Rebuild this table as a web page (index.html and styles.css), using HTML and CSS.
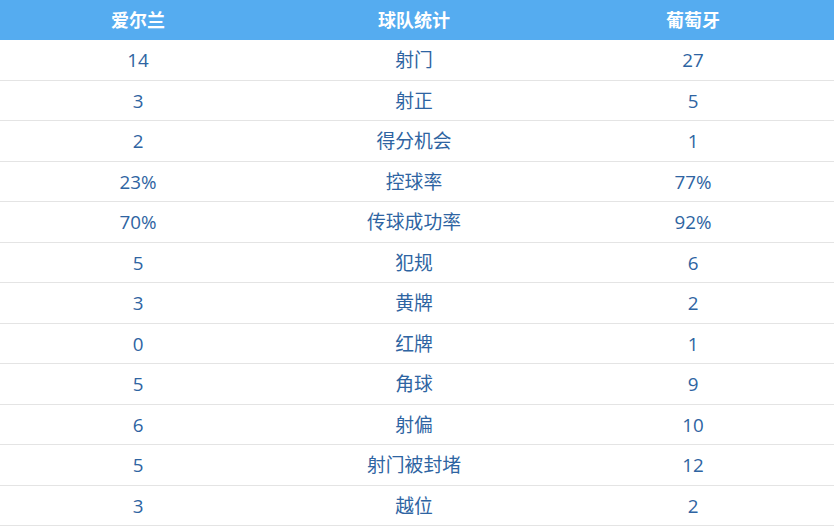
FILE: index.html
```html
<!DOCTYPE html>
<html lang="zh">
<head>
<meta charset="utf-8">
<link rel="stylesheet" href="styles.css">
</head>
<body>
<div class="stats">
  <div class="row head"><div>爱尔兰</div><div>球队统计</div><div>葡萄牙</div></div>
  <div class="row"><div>14</div><div>射门</div><div>27</div></div>
  <div class="row"><div>3</div><div>射正</div><div>5</div></div>
  <div class="row"><div>2</div><div>得分机会</div><div>1</div></div>
  <div class="row"><div>23%</div><div>控球率</div><div>77%</div></div>
  <div class="row"><div>70%</div><div>传球成功率</div><div>92%</div></div>
  <div class="row"><div>5</div><div>犯规</div><div>6</div></div>
  <div class="row"><div>3</div><div>黄牌</div><div>2</div></div>
  <div class="row"><div>0</div><div>红牌</div><div>1</div></div>
  <div class="row"><div>5</div><div>角球</div><div>9</div></div>
  <div class="row"><div>6</div><div>射偏</div><div>10</div></div>
  <div class="row"><div>5</div><div>射门被封堵</div><div>12</div></div>
  <div class="row"><div>3</div><div>越位</div><div>2</div></div>
</div>
</body>
</html>
```
FILE: styles.css
```css
html, body {
  margin: 0;
  padding: 0;
  background: #ffffff;
}
body {
  font-family: "Open Sans", "Noto Sans CJK SC", sans-serif;
  font-size: 18.8px;
  color: #2e64a2;
}
.stats {
  width: 834px;
}
.row {
  display: grid;
  grid-template-columns: 276px 276px 1fr;
  height: 39.5px;
  box-sizing: content-box;
  border-bottom: 1px solid #e4e4e4;
  align-items: center;
  text-align: center;
  line-height: 1;
}
.row > div {
  padding-top: 2px;
}
.row.head {
  height: 40px;
  border-bottom: 0;
  background: #55acf0;
  color: #ffffff;
  font-weight: bold;
  font-size: 18px;
}
.row.head > div {
  padding-top: 0;
}
```
